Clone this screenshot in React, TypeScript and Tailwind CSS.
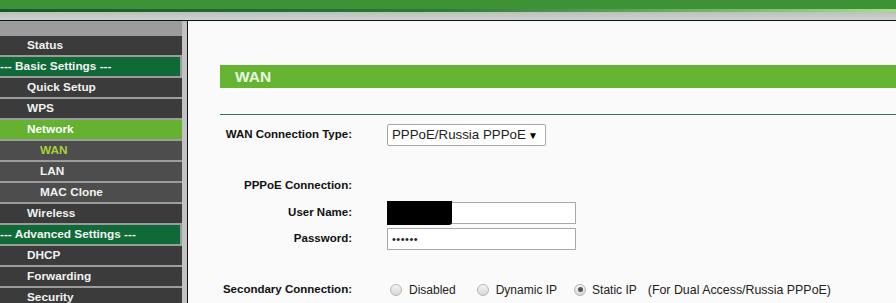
import * as React from "react";

const menu: { label: string; kind: "item" | "group" | "active" | "sub" | "subActive" }[] = [
  { label: "Status", kind: "item" },
  { label: "--- Basic Settings ---", kind: "group" },
  { label: "Quick Setup", kind: "item" },
  { label: "WPS", kind: "item" },
  { label: "Network", kind: "active" },
  { label: "WAN", kind: "subActive" },
  { label: "LAN", kind: "sub" },
  { label: "MAC Clone", kind: "sub" },
  { label: "Wireless", kind: "item" },
  { label: "--- Advanced Settings ---", kind: "group" },
  { label: "DHCP", kind: "item" },
  { label: "Forwarding", kind: "item" },
  { label: "Security", kind: "item" },
];

function MenuRow({ label, kind }: { label: string; kind: string }) {
  const base = "mb-[2px] flex h-[19px] shrink-0 items-center text-[11.8px] font-bold";
  if (kind === "group")
    return <div className={`${base} mr-[2px] bg-[#0f6a37] pl-0 text-[#f2f2f2]`}>{label}</div>;
  if (kind === "active")
    return <div className={`${base} bg-[#64b22f] pl-[27px] text-white`}>{label}</div>;
  if (kind === "subActive")
    return <div className={`${base} bg-[#4d4d4d] pl-[40px] text-[#a6d13c]`}>{label}</div>;
  if (kind === "sub")
    return <div className={`${base} bg-[#4d4d4d] pl-[40px] text-[#f2f2f2]`}>{label}</div>;
  return <div className={`${base} bg-[#3b3b3b] pl-[27px] text-[#f2f2f2]`}>{label}</div>;
}

function Radio({ checked }: { checked?: boolean }) {
  return (
    <span className="flex h-[12px] w-[12px] shrink-0 items-center justify-center rounded-full border border-[#b5b5b5] bg-gradient-to-b from-[#f4f4f4] to-[#d6d6d6]">
      {checked && <span className="h-[5px] w-[5px] rounded-full bg-[#555]" />}
    </span>
  );
}

function Row({ label, className, children }: { label: string; className: string; children?: React.ReactNode }) {
  return (
    <div className={`flex items-center ${className}`}>
      <div className="w-[132px] shrink-0 text-right text-[11.5px] font-bold text-[#111]">{label}</div>
      <div className="ml-[35px] flex items-center">{children}</div>
    </div>
  );
}

export default function App() {
  return (
    <div
      className="h-[303px] w-[896px] overflow-hidden bg-[#fafafa]"
      style={{ fontFamily: '"Liberation Sans", Arial, sans-serif' }}
    >
      <div className="h-[9px] bg-[#3e9236]" />
      <div className="h-[3px] bg-gradient-to-r from-[#17572c] via-[#2c7c3a] to-[#a9dc8e]" />
      <div className="h-[8px] bg-gradient-to-b from-[#b9c2b9] to-[#d0d3d0]" />
      <div className="h-px bg-[#111]" />

      <div className="flex h-[282px]">
        <div className="flex w-[182px] shrink-0 flex-col bg-[#9c9c9c] pt-[15px]">
          {menu.map((m) => (
            <MenuRow key={m.label} label={m.label} kind={m.kind} />
          ))}
        </div>
        <div className="w-[5px] shrink-0 bg-[#c2c2c2]" />
        <div className="w-px shrink-0 bg-[#111]" />

        <div className="flex-1 pl-[32px] pt-[44px]">
          <div className="flex h-[23px] items-center bg-[#65b431] pl-[15px] text-[15.5px] font-bold text-[#edf7e4]">
            WAN
          </div>
          <div className="mt-[26px] h-px bg-[#2a7a55]" />

          <Row label="WAN Connection Type:" className="mt-[9px] h-[22px]">
            <div className="flex h-[22px] w-[159px] items-center justify-between rounded-[2px] border border-[#a9a9a9] bg-white pl-[4px] pr-[7px] text-[13.3px] text-[#222]">
              <span>PPPoE/Russia PPPoE</span>
              <span className="text-[10px] text-black">▼</span>
            </div>
          </Row>

          <Row label="PPPoE Connection:" className="mt-[29px] h-[22px]" />

          <Row label="User Name:" className="mt-[5px] h-[22px]">
            <div className="relative h-[22px] w-[189px] border border-[#a9a9a9] bg-white">
              <div className="absolute -left-px -top-[2px] h-[24px] w-[65px] rounded-br-[3px] bg-black" />
            </div>
          </Row>

          <Row label="Password:" className="mt-[4px] h-[22px]">
            <div className="flex h-[22px] w-[189px] items-center border border-[#a9a9a9] bg-white pl-[4px] text-[11px] tracking-[0.5px] text-[#222]">
              ••••••
            </div>
          </Row>

          <Row label="Secondary Connection:" className="mt-[29px] h-[22px]">
            <div className="flex items-center text-[12px] text-[#222]">
              <span className="ml-[3px]"><Radio /></span>
              <span className="ml-[7px]">Disabled</span>
              <span className="ml-[21px]"><Radio /></span>
              <span className="ml-[7px]">Dynamic IP</span>
              <span className="ml-[17px]"><Radio checked /></span>
              <span className="ml-[6px]">Static IP</span>
              <span className="ml-[11px] text-[12.4px]">(For Dual Access/Russia PPPoE)</span>
            </div>
          </Row>
        </div>
      </div>
    </div>
  );
}
